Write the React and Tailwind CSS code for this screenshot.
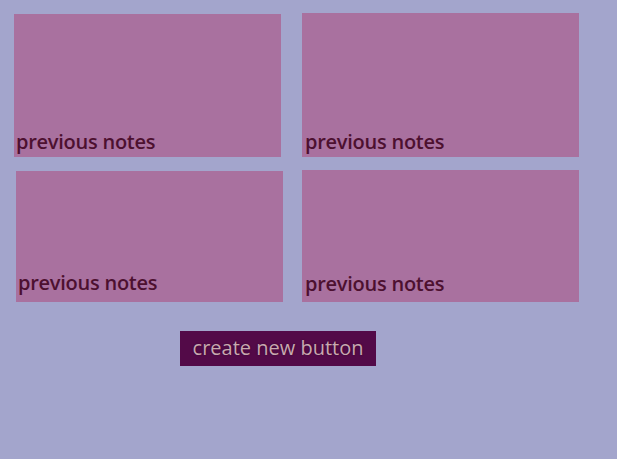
import React from 'react';

const NoteCard = ({ className, pad }) => (
  <div className={`flex flex-col justify-end bg-[#a9719f] ${className}`}>
    <span className={`${pad} text-[20px] font-semibold leading-[20px] tracking-[-0.25px] text-[#4d1030]`}>
      previous notes
    </span>
  </div>
);

export default function App() {
  return (
    <div className="h-[459px] w-[617px] bg-[#a3a5cc] pt-[13px] font-['Open_Sans',sans-serif]">
      <div className="flex items-start">
        <NoteCard className="ml-[14px] mt-px h-[143px] w-[267px] pl-[2px]" pad="pb-[5px]" />
        <NoteCard className="ml-[21px] h-[144px] w-[277px] pl-[3px]" pad="pb-[5px]" />
      </div>
      <div className="mt-[13px] flex items-start">
        <NoteCard className="ml-[16px] mt-px h-[131px] w-[267px] pl-[2px]" pad="pb-[9px]" />
        <NoteCard className="ml-[19px] h-[132px] w-[277px] pl-[3px]" pad="pb-[8px]" />
      </div>
      <button className="ml-[180px] mt-[29px] flex h-[35px] w-[196px] items-center justify-center bg-[#530a48] pb-[2px] text-[20px] leading-none text-[#c9a9b0] [text-shadow:0_0_2px_rgba(0,0,0,0.4)]">
        create new button
      </button>
    </div>
  );
}
